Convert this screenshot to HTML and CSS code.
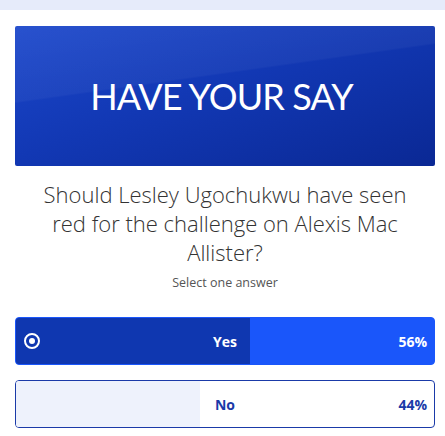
FILE: index.html
```html
<!DOCTYPE html>
<html lang="en">
<head>
<meta charset="utf-8">
<title>Have your say</title>
<link rel="stylesheet" href="styles.css">
</head>
<body>
<div class="strip"></div>
<main class="poll">
  <div class="banner"><h1 class="banner-title">HAVE YOUR SAY</h1></div>
  <h2 class="question">Should Lesley Ugochukwu have seen red for the challenge on Alexis Mac Allister?</h2>
  <p class="hint">Select one answer</p>
  <div class="options">
    <div class="option option-selected">
      <div class="fill" style="width:56%"></div>
      <span class="radio"></span>
      <span class="label">Yes</span>
      <span class="pct">56%</span>
    </div>
    <div class="option">
      <div class="fill" style="width:44%"></div>
      <span class="label">No</span>
      <span class="pct">44%</span>
    </div>
  </div>
</main>
</body>
</html>
```
FILE: styles.css
```css
* { box-sizing: border-box; }
html, body { overflow: hidden; }
body {
  margin: 0;
  background: #fff;
  font-family: "Open Sans", "Noto Sans", sans-serif;
}
.strip { height: 10px; background: #e6ebfa; }
.poll { padding: 16px 10px 0 15px; }
.banner {
  height: 140px;
  border-radius: 2px;
  background:
    linear-gradient(172deg, rgba(255,255,255,0.06) 0%, rgba(255,255,255,0.04) 38%, rgba(255,255,255,0) 39%),
    linear-gradient(160deg, #1b47cb 0%, #1238b4 45%, #0a2894 100%);
  display: flex;
  align-items: center;
  justify-content: center;
}
.banner-title {
  margin: 0 7px 0 0;
  color: #fff;
  font-family: Lato, sans-serif;
  font-weight: 400;
  font-size: 36px;
  line-height: 40px;
  letter-spacing: -0.9px;
}
.question {
  margin: 14px 20px 0;
  text-align: center;
  font-weight: 300;
  font-size: 22px;
  line-height: 29px;
  letter-spacing: 0;
  color: #333;
}
.hint {
  margin: 8px 0 0;
  text-align: center;
  font-size: 12.5px;
  line-height: 16px;
  color: #555;
}
.options { margin-top: 26px; display: flex; flex-direction: column; gap: 15px; }
.option {
  position: relative;
  height: 48px;
  border: 1px solid #1a3aa8;
  border-radius: 4px;
  overflow: hidden;
  display: flex;
  align-items: center;
  justify-content: center;
  color: #1a3aa8;
  font-weight: 700;
  font-size: 14px;
  background: #fff;
}
.fill { position: absolute; left: 0; top: 0; bottom: 0; background: #eef2fc; }
.option-selected { background: #1a56fa; border-color: #1a56fa; color: #fff; }
.option-selected .fill { background: #0f37b0; }
.label { position: relative; }
.pct { position: absolute; right: 7px; top: 50%; transform: translateY(-50%); }
.radio {
  position: absolute;
  left: 8px; top: 50%;
  width: 16px; height: 16px;
  margin-top: -8px;
  border: 2px solid #fff;
  border-radius: 50%;
}
.radio::after {
  content: "";
  position: absolute;
  left: 3px; top: 3px;
  width: 6px; height: 6px;
  border-radius: 50%;
  background: #fff;
}
```
